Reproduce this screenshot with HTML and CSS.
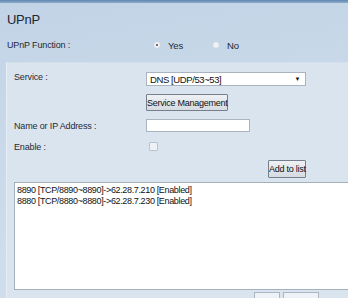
FILE: index.html
```html
<!DOCTYPE html>
<html>
<head><meta charset="utf-8"><link rel="stylesheet" href="styles.css"></head>
<body>
<div class="topbar"></div>
<div class="page">
  <h1 class="title">UPnP</h1>
  <div class="func-row">
    <span class="label">UPnP Function :</span>
    <span class="radio checked"></span><span class="rlabel yes">Yes</span>
    <span class="radio"></span><span class="rlabel">No</span>
  </div>
  <div class="panel">
    <div class="row row-service">
      <span class="label">Service :</span>
      <div class="select"><span>DNS [UDP/53~53]</span><span class="arrow">▼</span></div>
    </div>
    <div class="row row-btn">
      <span class="label"></span>
      <button class="btn btn-sm">Service Management</button>
    </div>
    <div class="row row-name">
      <span class="label">Name or IP Address :</span>
      <div class="input"></div>
    </div>
    <div class="row row-enable">
      <span class="label">Enable :</span>
      <span class="checkbox"></span>
    </div>
    <div class="row row-add">
      <button class="btn btn-add">Add to list</button>
    </div>
    <div class="list">
      <div>8890 [TCP/8890~8890]-&gt;62.28.7.210 [Enabled]</div>
      <div>8880 [TCP/8880~8880]-&gt;62.28.7.230 [Enabled]</div>
    </div>
    <div class="bottom">
      <span class="bbtn b1"></span><span class="bbtn b2"></span>
    </div>
  </div>
</div>
</body>
</html>
```
FILE: styles.css
```css
html, body { margin: 0; padding: 0; }
body {
  width: 348px; height: 298px; overflow: hidden;
  font-family: "Liberation Sans", Arial, sans-serif;
  font-size: 9px; letter-spacing: -0.15px; color: #1e2a36;
  background: linear-gradient(170deg, #c1d3e6 0%, #c9d9e9 40%, #d3e0ed 100%);
}
.topbar { height: 3px; background: linear-gradient(#5f86b2, #8eacc9); }
.page { padding: 0 0 0 6px; }
.title { margin: 0; padding: 9px 0 0 1px; font-size: 13px; letter-spacing: -0.3px; font-weight: normal; color: #1c2733; height: 18px; line-height: 16px; }
.func-row { display: flex; align-items: center; height: 30px; padding-left: 1px; }
.func-row .label { width: 146px; }
.radio { width: 6px; height: 6px; border-radius: 50%; background: #eef2f6; border: 1px solid #c8d2dc; box-sizing: content-box; margin-right: 7px; position: relative; }
.radio.checked::after { content: ""; position: absolute; left: 2px; top: 2px; width: 2px; height: 2px; border-radius: 50%; background: #444; }
.rlabel { font-size: 9.5px; }
.rlabel.yes { margin-right: 29px; }
.panel {
  margin-top: 2px;
  background: #dae4ee;
  border-left: 1px solid #e8eef5;
  border-top: 1px solid #d3dfeb;
  padding: 9px 0 0 7px;
  height: 240px;
}
.row { display: flex; align-items: center; }
.row .label { width: 132px; }
.row-service .label { margin-top: -5px; }
.select {
  width: 160px; height: 14px; box-sizing: border-box; background: #fff; border: 1px solid #a9b4bf;
  display: flex; justify-content: space-between; align-items: center; padding: 0 5px 0 3px; font-size: 9.5px; letter-spacing: -0.4px; color: #111;
}
.arrow { font-size: 6px; }
.row-btn { margin-top: 8px; }
.btn {
  font-family: "Liberation Sans", Arial, sans-serif; font-size: 9px; letter-spacing: -0.25px; color: #111;
  background: linear-gradient(#eef1f4, #d5dbe1); border: 1px solid #75808c; padding: 0;
  margin: 0; border-radius: 1px; box-sizing: border-box; white-space: nowrap; text-align: center;
}
.btn-sm { height: 17px; width: 82px; }
.row-name { margin-top: 8px; }
.input { width: 104px; height: 13px; box-sizing: border-box; background: #fff; border: 1px solid #a9b4bf; }
.row-enable { margin-top: 10px; height: 9px; }
.checkbox { width: 7px; height: 7px; border: 1px solid #b8c3ce; background: #eef2f6; margin-left: 3px; border-radius: 1px; }
.row-add { margin-top: 9px; justify-content: flex-end; padding-right: 42px; }
.btn-add { height: 18px; width: 38px; }
.list {
  margin-top: 4px; height: 108px; background: #fff; border: 1px solid #a4b0bc; border-right: none;
  padding: 2px 2px; font-size: 9px; letter-spacing: -0.35px; line-height: 11px; color: #111; box-sizing: border-box;
}
.bottom { display: flex; justify-content: flex-end; padding-right: 29px; padding-top: 2px; gap: 3px; }
.bbtn { height: 10px; border: 1px solid #aab6c2; border-bottom: none; background: #eef2f6; }
.b1 { width: 24px; } .b2 { width: 34px; }
```
